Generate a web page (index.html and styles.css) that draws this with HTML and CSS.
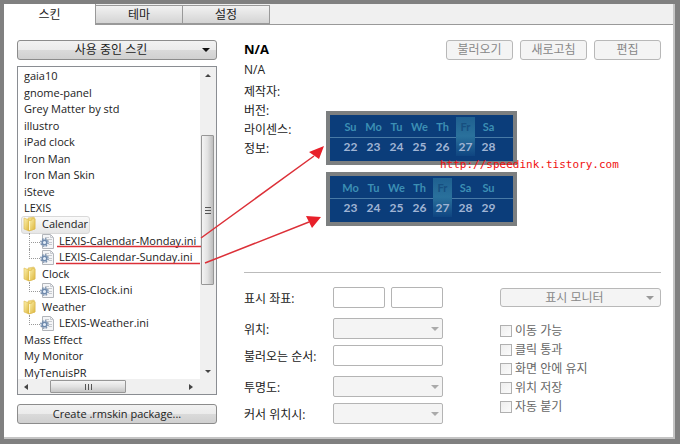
FILE: index.html
```
<!DOCTYPE html>
<html lang="ko">
<head>
  <meta charset="UTF-8" />
  <title>Rainmeter</title>
  <link rel="stylesheet" href="styles.css">
</head>
<body>
  <svg class="defs" width="0" height="0">
    <defs>
      <linearGradient id="gold" x1="0" x2="1" y1="0" y2="1">
        <stop offset="0" stop-color="#fdf3b0" />
        <stop offset="1" stop-color="#dcb53c" />
      </linearGradient>
      <symbol id="folder" viewBox="0 0 14 16">
        <path d="M5 2l6-1 1 2v10l-6 2z" fill="#f0d878" stroke="#dcc068" stroke-width=".6" />
        <path d="M1 2l5 2v11l-5-2z" fill="url(#gold)" stroke="#dbb84c" stroke-width=".6" />
        <path d="M6 5l3-1V2l3 1v10l-6 2z" fill="url(#gold)" stroke="#dbb84c" stroke-width=".6" />
        <path d="M6.500 5v9" stroke="#fff6c8" />
      </symbol>
      <symbol id="ini" viewBox="0 0 14 16">
        <path d="M2.500 1.500h8l3 3v11h-11z" fill="#f4f5f7" stroke="#b2b5ba" />
        <path d="M10.500 1.500v3h3M5 4.500h4M6 6.500h6M9 9.500h3M9 11.500h3" fill="none" stroke="#c6c9ce" />
        <circle cx="4.500" cy="9.500" r="3.700" fill="none" stroke="#7890ae" stroke-width="1.400" stroke-dasharray="1.700 1.200" />
        <circle cx="4.500" cy="9.500" r="2.300" fill="#e4edf7" stroke="#6e89ac" stroke-width="1.500" />
      </symbol>
    </defs>
  </svg>

  <div class="window">
    <nav class="tabs">
      <button class="tab active">스킨</button>
      <button class="tab">테마</button>
      <button class="tab">설정</button>
    </nav>

    <main class="page">
      <section class="sidebar">
        <button class="btn drop">사용 중인 스킨</button>
        <div class="listbox">
          <ul class="tree">
            <li>gaia10</li>
            <li>gnome-panel</li>
            <li>Grey Matter by std</li>
            <li>illustro</li>
            <li>iPad clock</li>
            <li>Iron Man</li>
            <li>Iron Man Skin</li>
            <li>iSteve</li>
            <li>LEXIS</li>
            <li class="folder selected"><svg class="icon"><use href="#folder" /></svg><span>Calendar</span></li>
            <li class="file more"><svg class="icon"><use href="#ini" /></svg><span>LEXIS-Calendar-Monday.ini</span></li>
            <li class="file"><svg class="icon"><use href="#ini" /></svg><span>LEXIS-Calendar-Sunday.ini</span></li>
            <li class="folder"><svg class="icon"><use href="#folder" /></svg><span>Clock</span></li>
            <li class="file"><svg class="icon"><use href="#ini" /></svg><span>LEXIS-Clock.ini</span></li>
            <li class="folder"><svg class="icon"><use href="#folder" /></svg><span>Weather</span></li>
            <li class="file"><svg class="icon"><use href="#ini" /></svg><span>LEXIS-Weather.ini</span></li>
            <li>Mass Effect</li>
            <li>My Monitor</li>
            <li>MyTenuisPR</li>
          </ul>
          <div class="vbar">
            <i class="arrow up"></i>
            <div class="thumb"></div>
            <i class="arrow down"></i>
          </div>
          <div class="hbar">
            <i class="arrow left"></i>
            <div class="thumb"></div>
            <i class="arrow right"></i>
          </div>
        </div>
        <button class="btn package">Create .rmskin package...</button>
      </section>

      <section class="content">
        <header class="info">
          <div class="meta">
            <h1>N/A</h1>
            <p class="file-name">N/A</p>
            <p>제작자:</p>
            <p>버전:</p>
            <p>라이센스:</p>
            <p>정보:</p>
          </div>
          <div class="actions">
            <button class="btn" disabled>불러오기</button>
            <button class="btn" disabled>새로고침</button>
            <button class="btn" disabled>편집</button>
          </div>
        </header>

        <form class="settings">
          <div class="fields">
            <label for="x">표시 좌표:</label>
            <div class="pair">
              <input type="text" id="x">
              <input type="text" id="y" aria-label="Y">
            </div>
            <label for="pos">위치:</label>
            <div class="select"><select id="pos" disabled></select></div>
            <label for="order">불러오는 순서:</label>
            <input type="text" id="order">
            <label for="alpha">투명도:</label>
            <div class="select"><select id="alpha" disabled></select></div>
            <label for="hover">커서 위치시:</label>
            <div class="select"><select id="hover" disabled></select></div>
          </div>
          <div class="options">
            <button type="button" class="btn drop" disabled>표시 모니터</button>
            <label><input type="checkbox" disabled>이동 가능</label>
            <label><input type="checkbox" disabled>클릭 통과</label>
            <label><input type="checkbox" disabled>화면 안에 유지</label>
            <label><input type="checkbox" disabled>위치 저장</label>
            <label><input type="checkbox" disabled>자동 붙기</label>
          </div>
        </form>
      </section>
    </main>
  </div>

  <!-- annotations over the window -->
  <div class="calendars">
    <table class="calendar">
      <thead><tr><th>Su</th><th>Mo</th><th>Tu</th><th>We</th><th>Th</th><th class="today">Fr</th><th>Sa</th></tr></thead>
      <tbody><tr><td>22</td><td>23</td><td>24</td><td>25</td><td>26</td><td class="today">27</td><td>28</td></tr></tbody>
    </table>
    <table class="calendar">
      <thead><tr><th>Mo</th><th>Tu</th><th>We</th><th>Th</th><th class="today">Fr</th><th>Sa</th><th>Su</th></tr></thead>
      <tbody><tr><td>23</td><td>24</td><td>25</td><td>26</td><td class="today">27</td><td>28</td><td>29</td></tr></tbody>
    </table>
  </div>
  <a class="site" href="http://speedink.tistory.com">http://speedink.tistory.com</a>
  <svg class="arrows" width="340" height="280">
    <g stroke="#dc3038" stroke-width="1.500" fill="none">
      <path d="M57 246.500h144M56 263.500h144" />
      <path d="M201 238L314 156M205 263L309 222" />
    </g>
    <path d="M324 146l-5 13-10-7zM321 217l-9 11-6-12z" fill="#e8202a" />
  </svg>
</body>
</html>
```
FILE: styles.css
```
* {
  box-sizing: border-box;
}
body {
  margin: 0;
  min-height: 100vh;
  display: flex;
  padding: 4px 5px 5px 4px;
  background: #808080;
  font: 12px/16px "Open Sans", "Noto Sans CJK KR", sans-serif;
  color: #222;
  position: relative;
}
button, input, select {
  font: inherit;
  color: inherit;
  margin: 0;
}
.defs {
  position: absolute;
}
.window {
  flex: 1;
  display: flex;
  flex-direction: column;
  background: #f0f0f0;
  border-right: 2px solid #c4c4c4;
  border-bottom: 2px solid #c4c4c4;
}

/* tabs */
.tabs {
  display: flex;
  align-items: flex-end;
  height: 21px;
  border-bottom: 1px solid #999;
}
.tab {
  width: 87px;
  height: 19px;
  padding: 0;
  border: 1px solid #999;
  border-left-width: 0;
  background: linear-gradient(#f2f2f2, #d4d4d4);
}
.tab.active {
  width: 92px;
  height: 21px;
  margin-bottom: -1px;
  border-width: 0 1px 0 0;
  background: #fff;
}

.page {
  flex: 1;
  display: flex;
  gap: 27px;
  padding: 15px 12px 13px 13px;
  background: #fff;
}

/* buttons */
.btn {
  height: 20px;
  padding: 0 8px;
  border: 1px solid #8c8c8c;
  border-radius: 3px;
  background: linear-gradient(#f2f2f2, #ebebeb 50%, #dadada 51%, #d0d0d0);
  line-height: 16px;
}
.btn:disabled {
  border-color: #b8b8b8;
  background: #f4f4f4;
  color: #888;
}
.btn.drop {
  display: flex;
  align-items: center;
  justify-content: center;
  position: relative;
  padding-right: 20px;
}
.btn.drop::after, .select::after {
  content: "";
  position: absolute;
  right: 6px;
  top: 7px;
  border: 4px solid transparent;
  border-top-color: #111;
  border-bottom: 0;
}
.btn.drop:disabled::after {
  border-top-color: #999;
}

/* skin list */
.sidebar {
  width: 200px;
  display: flex;
  flex-direction: column;
}
.package {
  font-size: 11px;
}
.listbox {
  flex: 1;
  display: grid;
  grid-template: minmax(0, 1fr) 15px / minmax(0, 1fr) 16px;
  margin: 6px 0 9px;
  border: 1px solid #8a8d92;
  min-height: 0;
}
.tree {
  display: grid;
  grid-auto-rows: 1fr;
  height: 314px;
  margin: 0 0 -2px;
  padding: 1px 0 0;
  list-style: none;
  font-size: 11px;
  clip-path: inset(0 0 2px 0);
}
.tree li {
  display: flex;
  align-items: center;
  padding-left: 6px;
  white-space: nowrap;
  position: relative;
}
.tree .folder {
  padding-left: 5px;
}
.tree .file {
  padding-left: 22px;
}
.icon {
  width: 14px;
  height: 16px;
  flex: none;
  margin-right: 5px;
}
.selected span {
  position: relative;
}
.selected::before {
  content: "";
  position: absolute;
  left: 3px;
  top: 0;
  width: 67px;
  height: 16px;
  border: 1px solid #d9d9d9;
  border-radius: 3px;
  background: linear-gradient(#fafafa, #e6e6e6);
}
.selected .icon {
  position: relative;
}
.file::before {
  content: "";
  position: absolute;
  left: 11px;
  top: 0;
  width: 10px;
  height: 9px;
  border: 1px dotted #999;
  border-width: 0 0 1px 1px;
}
.file.more::after {
  content: "";
  position: absolute;
  left: 11px;
  top: 9px;
  bottom: 0;
  border-left: 1px dotted #999;
}

/* scroll bars */
.vbar, .hbar {
  display: flex;
  align-items: center;
  background: #f0f0f0;
}
.vbar {
  flex-direction: column;
  padding: 7px 1px 6px 0;
}
.thumb {
  border: 1px solid #979797;
  border-radius: 1px;
}
.vbar .thumb {
  width: 13px;
  height: 150px;
  margin-top: 58px;
  margin-bottom: auto;
  background: repeating-linear-gradient(#555 0 1px, transparent 1px 3px) center / 6px 7px no-repeat, linear-gradient(90deg, #f4f4f4, #e2e2e2 50%, #bdbdbd);
}
.hbar {
  grid-column: 1 / -1;
  padding: 0 23px 0 6px;
}
.hbar .thumb {
  width: 76px;
  height: 13px;
  margin-left: 22px;
  margin-right: auto;
  background: repeating-linear-gradient(90deg, #555 0 1px, transparent 1px 3px) center / 7px 6px no-repeat, linear-gradient(#f4f4f4, #e2e2e2 50%, #c6c6c6);
}
.arrow {
  border: 3px solid transparent;
}
.arrow.up {
  border-bottom-color: #444;
  border-top: 0;
}
.arrow.down {
  border-top-color: #444;
  border-bottom: 0;
}
.arrow.left {
  border-right: 4px solid #444;
  border-left: 0;
}
.arrow.right {
  border-left: 4px solid #444;
  border-right: 0;
}

/* skin details */
.content {
  flex: 1;
  display: flex;
  flex-direction: column;
  justify-content: space-between;
}
.info {
  display: flex;
  justify-content: space-between;
}
h1 {
  margin: 0 0 4px;
  font-size: 13px;
  line-height: 18px;
  color: #000;
}
.meta p {
  margin: 0 0 3px;
}
.meta .file-name {
  margin-bottom: 6px;
}
.actions {
  display: flex;
  gap: 7px;
}
.actions .btn {
  width: 67px;
  padding: 0;
}

.settings {
  display: flex;
  justify-content: space-between;
  padding-top: 14px;
  border-top: 1px solid #bbb;
}
.fields {
  display: grid;
  grid-template-columns: 89px 110px;
  grid-template-rows: 31px 27px 31px 27px 21px;
  line-height: 23px;
}
.pair {
  display: flex;
  gap: 6px;
}
.fields input, .fields select {
  display: block;
  width: 100%;
  min-width: 0;
  height: 21px;
  border: 1px solid #b4b4b4;
  border-radius: 2px;
  background: #fff;
}
.fields select {
  appearance: none;
  opacity: 1;
  background: #f4f4f4;
}
.select {
  position: relative;
}
.select::after {
  right: 4px;
  top: 9px;
  border-top-color: #aaa;
}
.options {
  width: 161px;
  display: flex;
  flex-direction: column;
  color: #666;
}
.options .btn {
  height: 19px;
  margin: 1px 0 14px;
}
.options label {
  display: flex;
  align-items: center;
  gap: 3px;
  height: 19px;
}
.options input {
  appearance: none;
  width: 12px;
  height: 12px;
  border: 1px solid #b0b0b0;
  background: linear-gradient(135deg, #eee, #fbfbfb);
}

/* annotations */
.calendars {
  position: absolute;
  left: 326px;
  top: 111px;
  display: grid;
  gap: 7px;
}
.calendar {
  width: 191px;
  height: 54px;
  padding: 2px 13px 5px 9px;
  border: 4px solid #7c7f80;
  border-spacing: 0;
  table-layout: fixed;
  background: linear-gradient(#487aa6, #487aa6) 0 22px / 100% 1px no-repeat, #0b3d7a;
  font-family: Lato, sans-serif;
  font-weight: bold;
  text-align: center;
}
.calendar th, .calendar td {
  padding: 0;
  line-height: 19px;
}
.calendar th {
  font-size: 11px;
  color: #3c8fb4;
}
.calendar td {
  font-size: 12px;
  color: #a0b4d4;
}
.calendar .today {
  background: linear-gradient(#1f6090, #2a719c) center / 19px 100% no-repeat;
}
.calendar td.today {
  background-image: linear-gradient(#2a719c, #0f4581);
}
.calendar th.today {
  color: #174f80;
}
.site {
  position: absolute;
  left: 440px;
  top: 157px;
  font: 11px/16px "DejaVu Sans Mono", monospace;
  color: #f01010;
  text-decoration: none;
}
.arrows {
  position: absolute;
  left: 0;
  top: 0;
  pointer-events: none;
}
```
